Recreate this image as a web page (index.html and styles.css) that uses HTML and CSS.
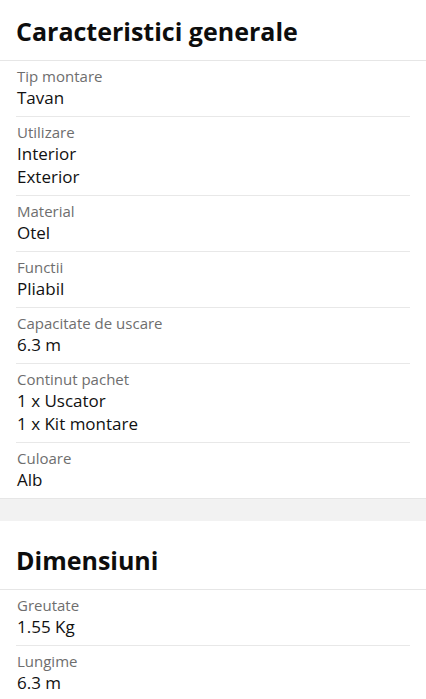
FILE: index.html
```html
<!DOCTYPE html>
<html lang="ro">
<head>
<meta charset="utf-8">
<title>Caracteristici</title>
<link rel="stylesheet" href="styles.css">
</head>
<body>
<section class="spec-section spec-section--first">
  <h2 class="spec-title">Caracteristici generale</h2>
  <div class="spec-list">
    <div class="spec-row"><div class="spec-label">Tip montare</div><div class="spec-value">Tavan</div></div>
    <div class="spec-row"><div class="spec-label">Utilizare</div><div class="spec-value">Interior</div><div class="spec-value">Exterior</div></div>
    <div class="spec-row"><div class="spec-label">Material</div><div class="spec-value">Otel</div></div>
    <div class="spec-row"><div class="spec-label">Functii</div><div class="spec-value">Pliabil</div></div>
    <div class="spec-row"><div class="spec-label">Capacitate de uscare</div><div class="spec-value">6.3 m</div></div>
    <div class="spec-row"><div class="spec-label">Continut pachet</div><div class="spec-value">1 x Uscator</div><div class="spec-value">1 x Kit montare</div></div>
    <div class="spec-row"><div class="spec-label">Culoare</div><div class="spec-value">Alb</div></div>
  </div>
</section>
<div class="spec-gap"></div>
<section class="spec-section">
  <h2 class="spec-title">Dimensiuni</h2>
  <div class="spec-list">
    <div class="spec-row"><div class="spec-label">Greutate</div><div class="spec-value">1.55 Kg</div></div>
    <div class="spec-row"><div class="spec-label">Lungime</div><div class="spec-value">6.3 m</div></div>
  </div>
</section>
</body>
</html>
```
FILE: styles.css
```css
html, body {
  margin: 0;
  padding: 0;
  background: #ffffff;
}
body {
  font-family: "Open Sans", "Noto Sans", sans-serif;
  color: #111111;
}
.spec-section {
  background: #ffffff;
  border-bottom: 1px solid #e6e6e6;
}
.spec-title {
  margin: 0;
  padding: 21px 16px 11px;
  font-size: 25px;
  line-height: 36px;
  font-weight: 700;
  color: #0d0d0d;
  border-bottom: 1px solid #e6e6e6;
}
.spec-section--first .spec-title {
  padding-top: 13px;
}
.spec-list {
  padding: 0 16px;
}
.spec-row {
  padding: 5px 1px 7px;
  border-bottom: 1px solid #e8e8e8;
}
.spec-row:last-child {
  border-bottom: none;
}
.spec-label {
  font-size: 15px;
  line-height: 20px;
  color: #6e6e6e;
}
.spec-value {
  font-size: 17px;
  line-height: 23px;
  font-weight: 500;
  color: #111111;
}
.spec-gap {
  height: 22px;
  background: #f2f2f2;
}
```
